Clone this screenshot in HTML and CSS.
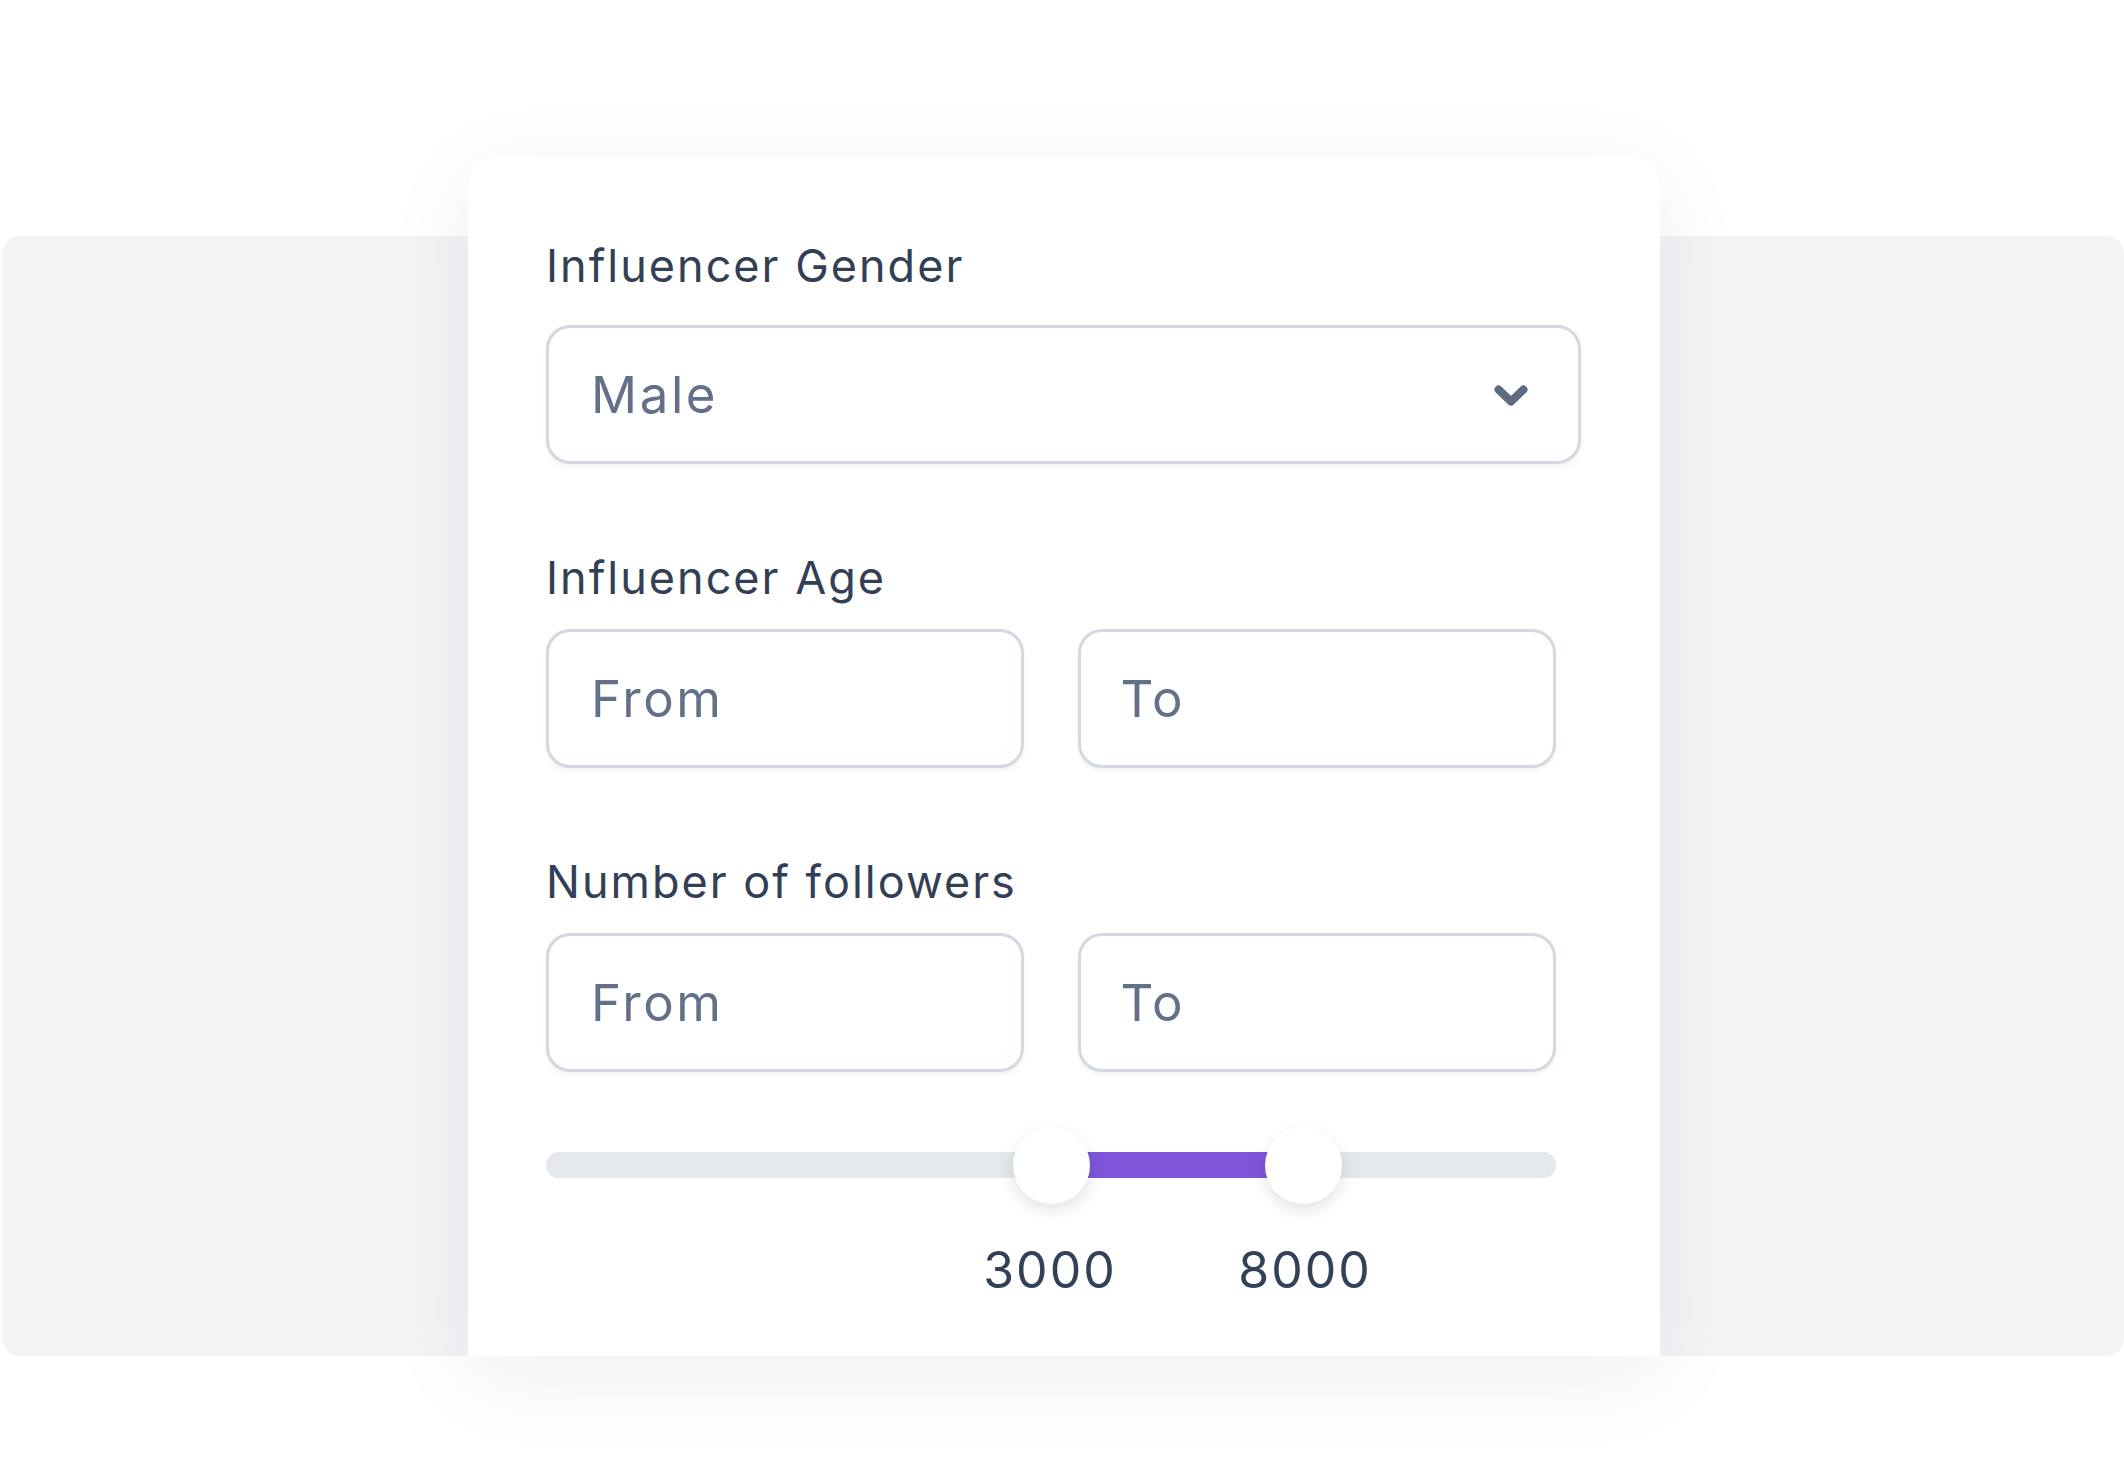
FILE: index.html
```html
<!DOCTYPE html>
<html lang="en">
<head>
<meta charset="utf-8">
<title>Influencer filters</title>
<link rel="stylesheet" href="styles.css">
</head>
<body>
<div class="stage">
  <div class="backdrop"></div>
  <section class="card">
    <div class="field field-gender">
      <div class="label">Influencer Gender</div>
      <div class="select">
        <span class="value">Male</span>
        <svg class="chevron" width="34" height="21" viewBox="0 0 34 21" aria-hidden="true">
          <polyline points="4.5,4.5 17,16.5 29.5,4.5" fill="none" stroke="#5f6a81" stroke-width="8" stroke-linecap="round" stroke-linejoin="round"/>
        </svg>
      </div>
    </div>
    <div class="field">
      <div class="label">Influencer Age</div>
      <div class="pair">
        <div class="input"><span class="value">From</span></div>
        <div class="input"><span class="value">To</span></div>
      </div>
    </div>
    <div class="field field-followers">
      <div class="label">Number of followers</div>
      <div class="pair">
        <div class="input"><span class="value">From</span></div>
        <div class="input"><span class="value">To</span></div>
      </div>
      <div class="slider">
        <div class="track">
          <div class="fill" style="left:50%;width:25%"></div>
          <div class="thumb" style="left:50%"></div>
          <div class="thumb" style="left:75%"></div>
        </div>
      </div>
      <div class="values">
        <span class="num">3000</span>
        <span class="num">8000</span>
      </div>
    </div>
  </section>
</div>
</body>
</html>
```
FILE: styles.css
```css
html, body {
  margin: 0;
  padding: 0;
  background: #ffffff;
}
body {
  width: 2124px;
  height: 1473px;
  overflow: hidden;
  font-family: "Inter", "Noto Sans", sans-serif;
}
.stage {
  display: grid;
  padding-top: 156px;
}
.backdrop {
  grid-area: 1 / 1;
  margin-top: 80px;
  margin-left: 2px;
  width: 2122px;
  height: 1120px;
  background: #f3f4f6;
  border-radius: 18px;
}
.card {
  grid-area: 1 / 1;
  position: relative;
  margin-left: 468px;
  width: 1192px;
  height: 1200px;
  box-sizing: border-box;
  padding: 87px 78px 0 78px;
  background: #ffffff;
  border-radius: 30px 30px 0 0;
  box-shadow: 0 20px 90px rgba(30, 35, 50, 0.07);
}
.label {
  font-size: 45px;
  line-height: 45px;
  height: 45px;
  color: #333f55;
  letter-spacing: 2px;
  margin-bottom: 29px;
  white-space: nowrap;
}
.field-gender .label {
  margin-bottom: 37px;
}
.field {
  margin-bottom: 91px;
}
.select, .input {
  box-sizing: border-box;
  height: 139px;
  border: 3px solid #d3d8e1;
  border-radius: 24px;
  background: #ffffff;
  box-shadow: 0 3px 5px rgba(16, 24, 40, 0.05);
  display: flex;
  align-items: center;
  padding: 0 50px 0 42px;
}
.select {
  width: 1035px;
  justify-content: space-between;
}
.value {
  font-size: 51px;
  color: #647089;
  letter-spacing: 2.6px;
}
.chevron {
  display: block;
  margin-top: 2px;
}
.pair {
  width: 1010px;
  display: grid;
  grid-template-columns: 1fr 1fr;
  column-gap: 53px;
}
.input {
  width: 478px;
}
.input + .input .value {
  margin-left: -2px;
}
.slider {
  width: 1010px;
  height: 78px;
  margin-top: 54px;
  display: flex;
  align-items: center;
}
.track {
  position: relative;
  width: 100%;
  height: 26px;
  border-radius: 13px;
  background: #e4e7ec;
}
.fill {
  position: absolute;
  top: 0;
  height: 26px;
  background: #7f56d9;
}
.thumb {
  position: absolute;
  top: 50%;
  width: 77px;
  height: 77px;
  margin-left: -38.5px;
  margin-top: -38.5px;
  border-radius: 50%;
  background: #ffffff;
  box-shadow: 0 6px 16px rgba(20, 25, 40, 0.12);
}
.values {
  display: flex;
  margin-top: 41px;
  margin-left: 404px;
  column-gap: 55px;
}
.num {
  width: 200px;
  text-align: center;
  font-size: 50px;
  line-height: 50px;
  color: #334158;
  letter-spacing: 2px;
}
```
